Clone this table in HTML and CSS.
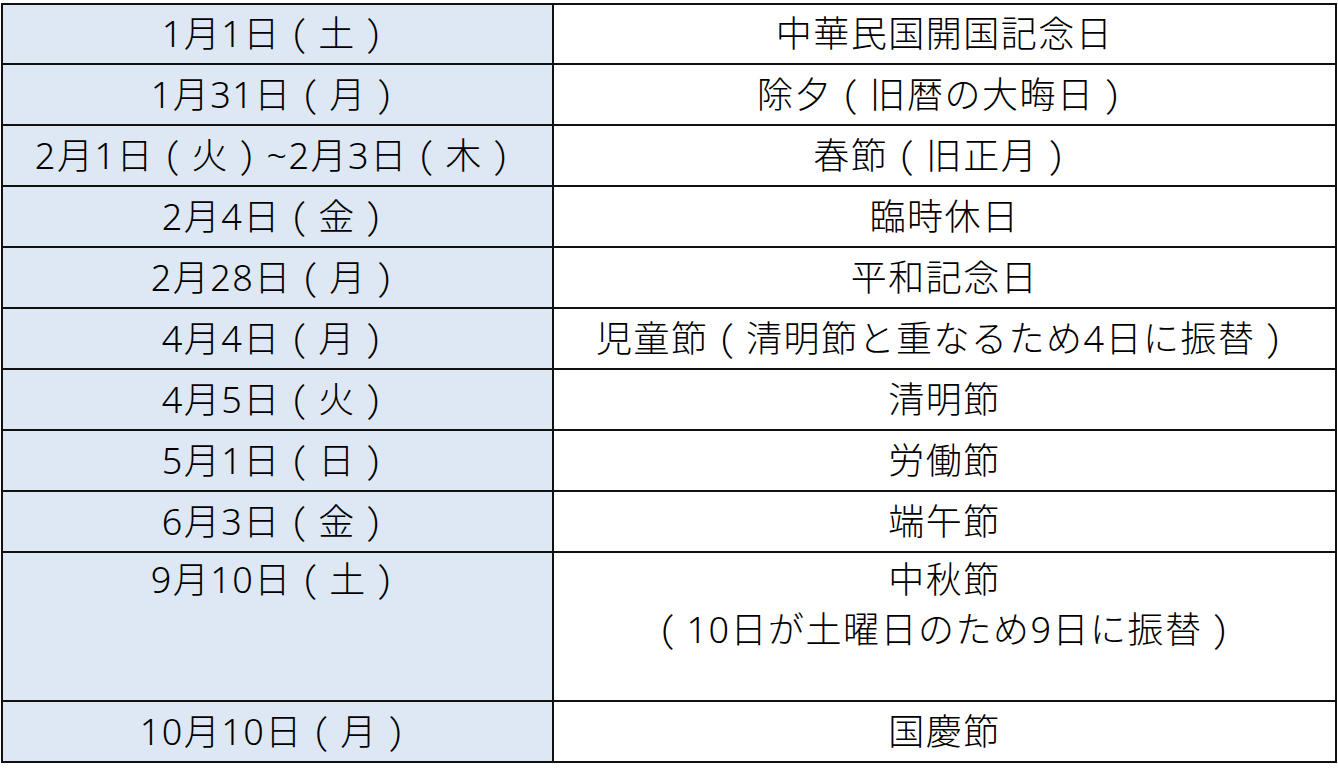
FILE: index.html
```html
<!DOCTYPE html>
<html lang="ja">
<head>
<meta charset="utf-8">
<title>2022年 台湾の祝日</title>
<link rel="stylesheet" href="styles.css">
</head>
<body>
<table class="holidays">
  <tbody>
    <tr class="row first"><td class="date">1月1日<span class="p">（</span>土<span class="p">）</span></td><td class="name">中華民国開国記念日</td></tr>
    <tr class="row"><td class="date">1月31日<span class="p">（</span>月<span class="p">）</span></td><td class="name">除夕<span class="p">（</span>旧暦の大晦日<span class="p">）</span></td></tr>
    <tr class="row"><td class="date">2月1日<span class="p">（</span>火<span class="p">）</span>~2月3日<span class="p">（</span>木<span class="p">）</span></td><td class="name">春節<span class="p">（</span>旧正月<span class="p">）</span></td></tr>
    <tr class="row"><td class="date">2月4日<span class="p">（</span>金<span class="p">）</span></td><td class="name">臨時休日</td></tr>
    <tr class="row"><td class="date">2月28日<span class="p">（</span>月<span class="p">）</span></td><td class="name">平和記念日</td></tr>
    <tr class="row"><td class="date">4月4日<span class="p">（</span>月<span class="p">）</span></td><td class="name">児童節<span class="p">（</span>清明節と重なるため4日に振替<span class="p">）</span></td></tr>
    <tr class="row"><td class="date">4月5日<span class="p">（</span>火<span class="p">）</span></td><td class="name">清明節</td></tr>
    <tr class="row"><td class="date">5月1日<span class="p">（</span>日<span class="p">）</span></td><td class="name">労働節</td></tr>
    <tr class="row"><td class="date">6月3日<span class="p">（</span>金<span class="p">）</span></td><td class="name">端午節</td></tr>
    <tr class="row tall"><td class="date">9月10日<span class="p">（</span>土<span class="p">）</span></td><td class="name">中秋節<br><span class="p">（</span>10日が土曜日のため9日に振替<span class="p">）</span></td></tr>
    <tr class="row"><td class="date">10月10日<span class="p">（</span>月<span class="p">）</span></td><td class="name">国慶節</td></tr>
  </tbody>
</table>
</body>
</html>
```
FILE: styles.css
```css
html, body {
  margin: 0;
  padding: 0;
  background: #ffffff;
}

.holidays {
  margin: 3px 0 0 1px;
  width: 1336px;
  border-collapse: separate;
  border-spacing: 0;
  border-top: 2px solid #111;
  border-left: 2px solid #111;
  table-layout: fixed;
  font-family: "Noto Sans", "Noto Sans CJK JP", sans-serif;
  font-size: 36px;
  font-weight: 300;
  letter-spacing: 1.5px;
  color: #000;
}

.holidays td {
  box-sizing: border-box;
  height: 61px;
  padding: 0;
  border-right: 2px solid #111;
  border-bottom: 2px solid #111;
  text-align: center;
  vertical-align: middle;
  line-height: 50px;
  white-space: nowrap;
}

.holidays .p {
  display: inline-block;
  width: 1em;
  text-align: center;
  font-feature-settings: "hwid" 1;
  letter-spacing: 0;
  margin-right: 1.5px;
}

.holidays .first td {
  height: 60px;
}

.holidays .date {
  width: 551px;
  background: #dde8f4;
}

.holidays .name {
  background: #ffffff;
}

.holidays .tall td {
  height: 149px;
  vertical-align: top;
  padding-top: 2px;
}
```
